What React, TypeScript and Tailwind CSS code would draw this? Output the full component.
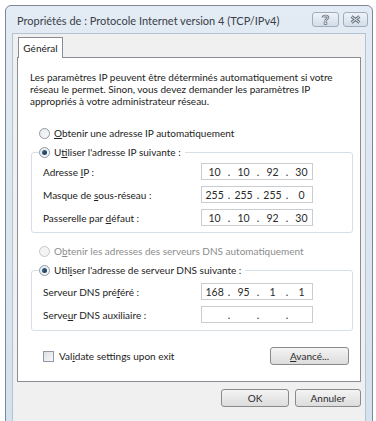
import React from 'react';

const font = { fontFamily: 'Lato, "Noto Sans", "Liberation Sans", sans-serif' };

const U: React.FC<{ children: React.ReactNode }> = ({ children }) => <span className="underline underline-offset-[1px]">{children}</span>;

const Radio: React.FC<{ checked?: boolean; disabled?: boolean }> = ({ checked, disabled }) => (
  <span
    className={`relative flex h-[11px] w-[11px] shrink-0 items-center justify-center rounded-full border ${
      disabled ? 'border-[#c4c8cc] bg-[#f4f4f4]' : 'border-[#8e9aa6] bg-gradient-to-br from-[#e6e8ea] to-[#fbfbfb]'
    }`}
  >
    {checked && <span className="h-[5px] w-[5px] rounded-full bg-gradient-to-br from-[#3d6c96] to-[#16364f]" />}
  </span>
);

const IpBox: React.FC<{ parts: string[] }> = ({ parts }) => (
  <div className="flex h-[17px] w-[112px] items-center border border-[#c9ccd1] bg-white pl-[2px] text-[10.5px] text-[#2a2a2a]">
    {parts.map((p, i) => (
      <React.Fragment key={i}>
        <span className="w-[22px] text-center">{p}</span>
        {i < 3 && <span className="w-[8px] text-center">.</span>}
      </React.Fragment>
    ))}
  </div>
);

const Row: React.FC<{ label: React.ReactNode; parts: string[] }> = ({ label, parts }) => (
  <div className="flex h-[17px] items-center justify-between">
    <span>{label}</span>
    <IpBox parts={parts} />
  </div>
);

const Button: React.FC<{ children: React.ReactNode; className?: string }> = ({ children, className }) => (
  <button className={`flex h-[18px] items-center justify-center rounded-[3px] border border-[#8a8a8a] bg-gradient-to-b from-[#f4f4f4] to-[#dcdcdc] text-[10px] text-[#2a2a2a] ${className ?? ''}`}>
    {children}
  </button>
);

export default function App() {
  return (
    <div className="h-[421px] w-[376px] overflow-hidden bg-white pl-[5px] pt-[5px] leading-[12px] text-[#222]" style={font}>
      <div className="flex h-[420px] w-[368px] flex-col rounded-t-[6px] border border-[#7c8894] bg-gradient-to-b from-[#e3ebf4] to-[#d4e1ee] px-[6px]">
        {/* title bar */}
        <div className="flex h-[27px] shrink-0 items-center justify-between pl-[5px]">
          <span className="mt-[3px] text-[11px] text-[#3a4048]">Propriétés de : Protocole Internet version 4 (TCP/IPv4)</span>
          <div className="mr-[-2px] flex gap-[4px]">
            <div className="flex h-[15px] w-[27px] items-center justify-center rounded-[3px] border border-[#9fadbb] bg-gradient-to-b from-[#eef3f8] to-[#d3dde8]">
              <svg width="9" height="11" viewBox="0 0 9 11">
                <path d="M2 3.5 C2 1.5 7 1.5 7 3.5 C7 5 4.5 5 4.5 7" fill="none" stroke="#6a7684" strokeWidth="2.6" />
                <path d="M2 3.5 C2 1.5 7 1.5 7 3.5 C7 5 4.5 5 4.5 7" fill="none" stroke="#eef2f6" strokeWidth="1" />
                <rect x="3.2" y="8" width="2.6" height="2.4" fill="#eef2f6" stroke="#6a7684" strokeWidth="0.8" />
              </svg>
            </div>
            <div className="flex h-[15px] w-[25px] items-center justify-center rounded-[3px] border border-[#9fadbb] bg-gradient-to-b from-[#eef3f8] to-[#d3dde8]">
              <svg width="11" height="9" viewBox="0 0 11 9">
                <path d="M1.5 1.5 L9.5 7.5 M9.5 1.5 L1.5 7.5" stroke="#6a7684" strokeWidth="3" />
                <path d="M1.5 1.5 L9.5 7.5 M9.5 1.5 L1.5 7.5" stroke="#eef2f6" strokeWidth="1" />
              </svg>
            </div>
          </div>
        </div>

        {/* client area */}
        <div className="flex flex-1 flex-col border border-b-0 border-[#b4c3d3] bg-[#f0f0f0] px-[4px] pt-[3px] text-[10px]">
          <div className="flex">
            <div className="relative z-10 -mb-px ml-[1px] flex h-[21px] w-[45px] items-center justify-center border border-b-0 border-[#898c95] bg-white">
              Général
            </div>
          </div>
          <div className="flex h-[325px] flex-col border border-[#898c95] bg-white">
            <p className="px-[12px] pt-[13px] leading-[12px]">
              Les paramètres IP peuvent être déterminés automatiquement si votre réseau le permet. Sinon, vous devez demander les paramètres IP appropriés à votre administrateur réseau.
            </p>

            <label className="ml-[21px] mt-[19px] flex h-[14px] items-center gap-[4px]">
              <Radio />
              <span><U>O</U>btenir une adresse IP automatiquement</span>
            </label>

            <fieldset className="ml-[13px] mt-[5px] w-[322px] rounded-[3px] border border-[#d5dfe5] pb-[6px] pl-[11px] pr-[39px]">
              <legend className="-ml-[4px] flex h-[14px] items-center gap-[4px] pr-[4px]">
                <Radio checked />
                <span>U<U>t</U>iliser l'adresse IP suivante :</span>
              </legend>
              <div className="flex flex-col gap-[6px] pt-[4px]">
                <Row label={<>Adresse <U>I</U>P :</>} parts={['10', '10', '92', '30']} />
                <Row label={<>Masque de <U>s</U>ous-réseau :</>} parts={['255', '255', '255', '0']} />
                <Row label={<>Passerelle par <U>d</U>éfaut :</>} parts={['10', '10', '92', '30']} />
              </div>
            </fieldset>

            <label className="ml-[21px] mt-[11px] flex h-[14px] items-center gap-[4px] text-[#8d8d8d]">
              <Radio disabled />
              <span>O<U>b</U>tenir les adresses des serveurs DNS automatiquement</span>
            </label>

            <fieldset className="ml-[13px] mt-[5px] w-[322px] rounded-[3px] border border-[#d5dfe5] pb-[7px] pl-[11px] pr-[39px]">
              <legend className="-ml-[4px] flex h-[14px] items-center gap-[4px] pr-[4px]">
                <Radio checked />
                <span>Util<U>i</U>ser l'adresse de serveur DNS suivante :</span>
              </legend>
              <div className="flex flex-col gap-[6px] pt-[6px]">
                <Row label={<>Serveur DNS pré<U>f</U>éré :</>} parts={['168', '95', '1', '1']} />
                <Row label={<>Serve<U>u</U>r DNS auxiliaire :</>} parts={['', '', '', '']} />
              </div>
            </fieldset>

            <div className="ml-[25px] mr-[11px] mt-[16px] flex items-center justify-between">
              <label className="flex items-center gap-[5px]">
                <span className="h-[11px] w-[11px] border border-[#8e9aa6] bg-gradient-to-br from-[#dcdfe2] to-[#f8f8f8]" />
                <span>Val<U>i</U>date settings upon exit</span>
              </label>
              <Button className="w-[79px]"><span><U>A</U>vancé...</span></Button>
            </div>
          </div>

          <div className="mt-[7px] flex justify-end gap-[6px]">
            <Button className="w-[68px]">OK</Button>
            <Button className="w-[66px]">Annuler</Button>
          </div>
        </div>
      </div>
    </div>
  );
}
